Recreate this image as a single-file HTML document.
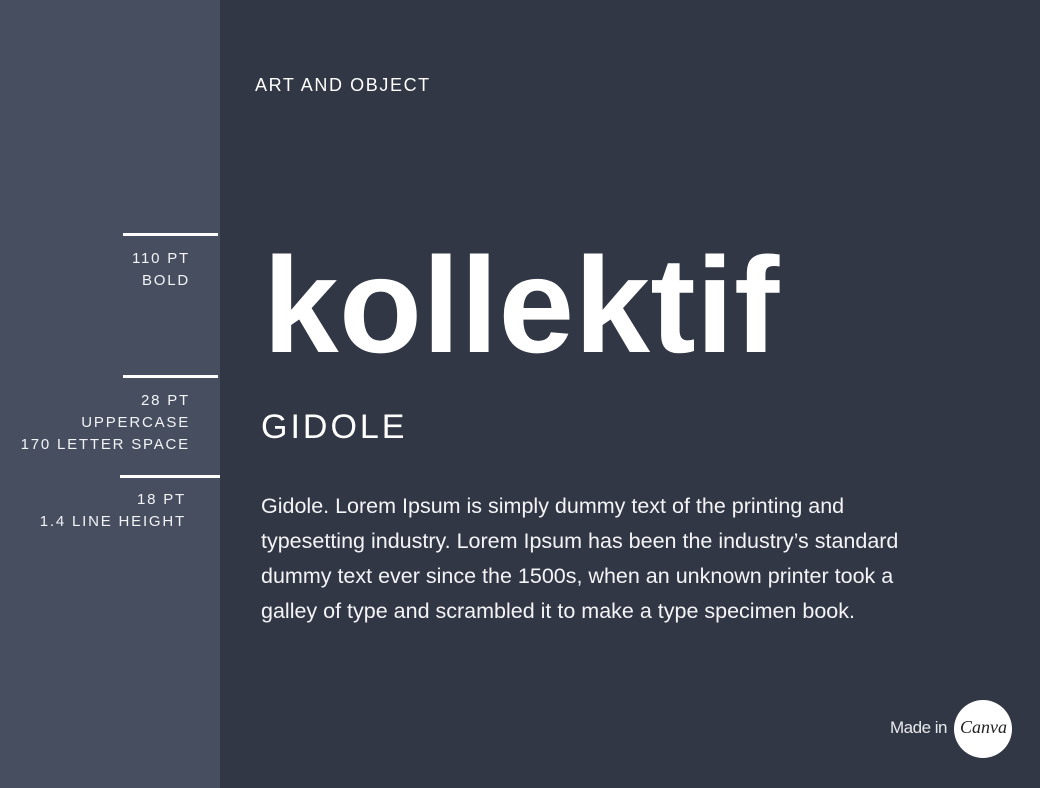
<!DOCTYPE html>
<html><head><meta charset="utf-8"><style>
*{margin:0;padding:0}
body{width:1040px;height:788px;background:#323745;position:relative;overflow:hidden;font-family:"Liberation Sans",sans-serif;color:#fff}
.side{position:absolute;left:0;top:0;width:220px;height:788px;background:#474e60}
.ln{position:absolute;height:3px;background:#fff}
.lab{position:absolute;right:850px;text-align:right;font-size:15px;letter-spacing:1.8px;line-height:22px;color:#f2f3f5;white-space:nowrap}
.t{position:absolute;white-space:nowrap}
.body{position:absolute;left:261px;font-size:21.5px;white-space:nowrap;color:#f4f4f6}
</style></head><body>
<div class="side"></div>
<div class="ln" style="left:123px;top:233px;width:95px"></div>
<div class="ln" style="left:123px;top:375px;width:95px"></div>
<div class="ln" style="left:120px;top:475px;width:100px"></div>
<div class="lab" style="top:248px">110 PT<br>BOLD</div>
<div class="lab" style="top:390px">28 PT<br>UPPERCASE<br>170 LETTER SPACE</div>
<div class="lab" style="top:489px;right:854px">18 PT<br>1.4 LINE HEIGHT</div>
<div class="t" style="left:255px;top:75px;font-size:18px;letter-spacing:1.6px">ART AND OBJECT</div>
<div class="t" style="left:263px;top:219px;font-size:136px;font-weight:bold;letter-spacing:0.3px;line-height:172px">kollektif</div>
<div class="t" style="left:261px;top:406px;font-size:34px;letter-spacing:3px;line-height:42px">GIDOLE</div>
<div class="body" style="top:494px">Gidole. Lorem Ipsum is simply dummy text of the printing and</div>
<div class="body" style="top:529px">typesetting industry. Lorem Ipsum has been the industry’s standard</div>
<div class="body" style="top:564px">dummy text ever since the 1500s, when an unknown printer took a</div>
<div class="body" style="top:599px">galley of type and scrambled it to make a type specimen book.</div>
<div class="t" style="left:890px;top:718px;font-size:17px;color:#e8e9ec;letter-spacing:-0.5px">Made in</div>
<div style="position:absolute;left:954px;top:700px;width:58px;height:58px;border-radius:50%;background:#fff"></div>
<div class="t" style="left:960px;top:717px;font-family:'Liberation Serif',serif;font-style:italic;font-size:18px;color:#222">Canva</div>
</body></html>
